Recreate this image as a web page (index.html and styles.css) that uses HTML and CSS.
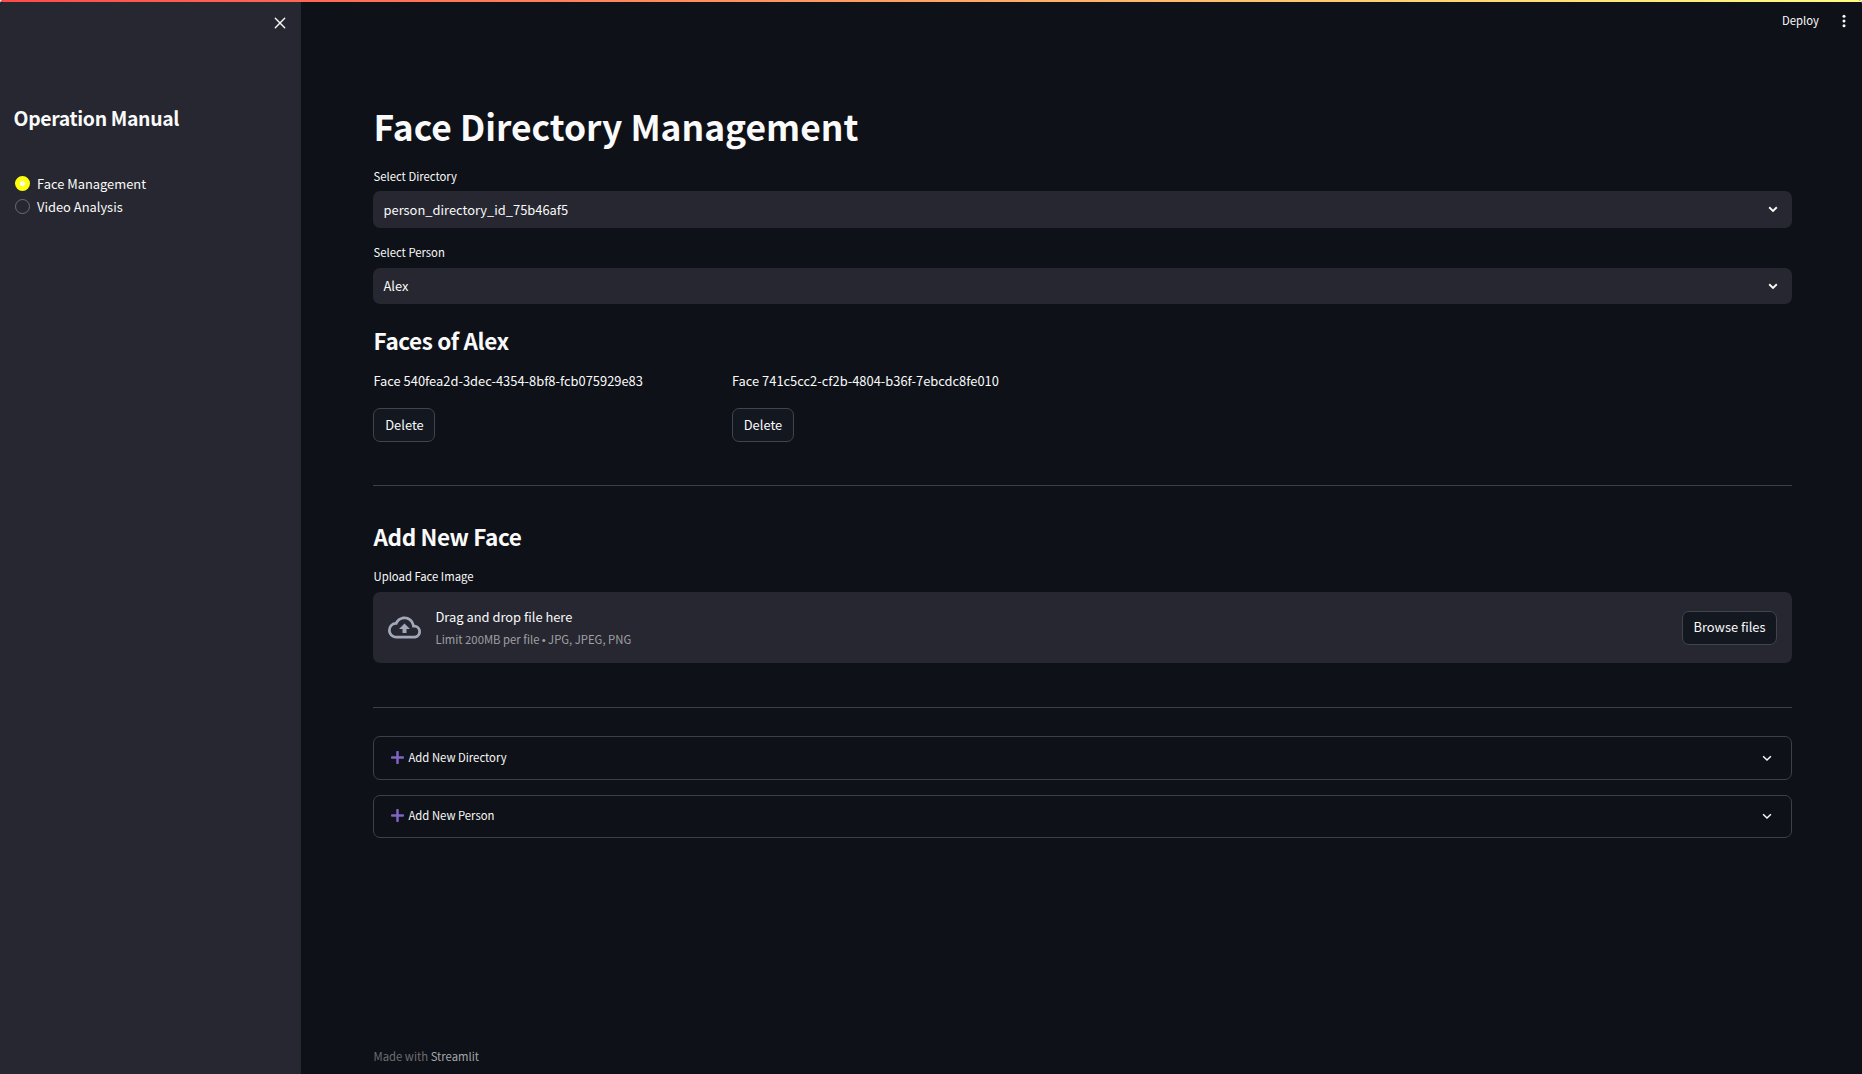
FILE: index.html
```html
<!DOCTYPE html>
<html lang="en">
<head>
<meta charset="utf-8">
<title>Face Directory Management</title>
<link rel="stylesheet" href="styles.css">
</head>
<body>
<div class="decoration"></div>
<div class="app">
  <aside class="sidebar">
    <button class="close" aria-label="Close"><svg width="12" height="12" viewBox="0 0 12 12"><path d="M1.3 1.3l9.4 9.4M10.7 1.3l-9.4 9.4" fill="none" stroke="#fafafa" stroke-width="1.4" stroke-linecap="round"/></svg></button>
    <h2 class="side-title">Operation Manual</h2>
    <div class="radios">
      <label class="radio"><span class="dot dot-on"></span><span>Face Management</span></label>
      <label class="radio"><span class="dot"></span><span>Video Analysis</span></label>
    </div>
  </aside>
  <main class="main">
    <header class="toolbar">
      <span class="deploy">Deploy</span>
      <svg width="4" height="14" viewBox="0 0 4 14" fill="#fafafa"><circle cx="2" cy="2.3" r="1.5"/><circle cx="2" cy="7" r="1.5"/><circle cx="2" cy="11.7" r="1.5"/></svg>
    </header>
    <section class="content">
      <h1 class="title">Face Directory Management</h1>
      <div class="label">Select Directory</div>
      <div class="select select-dir"><span>person_directory_id_75b46af5</span><svg width="10" height="7" viewBox="0 0 10 7"><path d="M1.2 1.3L5 4.9l3.8-3.6" fill="none" stroke="#fafafa" stroke-width="1.9"/></svg></div>
      <div class="label label-person">Select Person</div>
      <div class="select select-person"><span>Alex</span><svg width="10" height="7" viewBox="0 0 10 7"><path d="M1.2 1.3L5 4.9l3.8-3.6" fill="none" stroke="#fafafa" stroke-width="1.9"/></svg></div>
      <h3 class="heading heading-faces">Faces of Alex</h3>
      <div class="faces">
        <div class="face"><p class="face-id">Face 540fea2d-3dec-4354-8bf8-fcb075929e83</p><button class="btn">Delete</button></div>
        <div class="face"><p class="face-id">Face 741c5cc2-cf2b-4804-b36f-7ebcdc8fe010</p><button class="btn">Delete</button></div>
      </div>
      <hr class="rule">
      <h3 class="heading heading-add">Add New Face</h3>
      <div class="label label-upload">Upload Face Image</div>
      <div class="uploader">
        <svg class="cloud" width="33" height="33" viewBox="0 0 24 24" fill="#a3a8b8"><path d="M19.35 10.04A7.49 7.49 0 0012 4C9.11 4 6.6 5.64 5.35 8.04A5.994 5.994 0 000 14c0 3.31 2.69 6 6 6h13c2.76 0 5-2.24 5-5 0-2.64-2.05-4.78-4.65-4.96zM19 18H6c-2.21 0-4-1.79-4-4 0-2.05 1.53-3.76 3.56-3.97l1.07-.11.5-.95A5.469 5.469 0 0112 6c2.62 0 4.88 1.86 5.39 4.43l.3 1.5 1.53.11A2.98 2.98 0 0122 15c0 1.65-1.35 3-3 3zM8 13h2.55v3h2.9v-3H16l-4-4z"/></svg>
        <div class="drop"><span class="drop-main">Drag and drop file here</span><span class="drop-limit">Limit 200MB per file <span class="bullet">•</span> JPG, JPEG, PNG</span></div>
        <button class="btn btn-browse">Browse files</button>
      </div>
      <hr class="rule rule-second">
      <div class="expander"><svg class="plus" width="13" height="13" viewBox="0 0 13 13"><path d="M6.5 1v11M1 6.5h11" stroke="#8064c4" stroke-width="2.5" stroke-linecap="round"/></svg><span>Add New Directory</span><svg class="chevron" width="10" height="7" viewBox="0 0 10 7"><path d="M1.1 1.3L5 5l3.9-3.7" fill="none" stroke="#fafafa" stroke-width="1.5"/></svg></div>
      <div class="expander expander-person"><svg class="plus" width="13" height="13" viewBox="0 0 13 13"><path d="M6.5 1v11M1 6.5h11" stroke="#8064c4" stroke-width="2.5" stroke-linecap="round"/></svg><span>Add New Person</span><svg class="chevron" width="10" height="7" viewBox="0 0 10 7"><path d="M1.1 1.3L5 5l3.9-3.7" fill="none" stroke="#fafafa" stroke-width="1.5"/></svg></div>
    </section>
    <footer class="footer">Made with <b>Streamlit</b></footer>
  </main>
</div>
</body>
</html>
```
FILE: styles.css
```css
* { box-sizing: border-box; }
html { background: #fff; }
body {
  margin: 0;
  height: 1074px;
  overflow: hidden;
  display: flex;
  flex-direction: column;
  border-radius: 4px 4px 0 0;
  background: #0e1117;
  color: #fafafa;
  font: 400 12.9px/22px "Source Sans Pro", "Noto Sans CJK SC", sans-serif;
}
h1, h2, h3, p { margin: 0; }
svg { display: block; flex: none; }
button { font: inherit; color: inherit; }
.decoration { height: 2px; flex: none; background: linear-gradient(90deg, #ff4b4b, #fffd80); }
.app { display: flex; flex: 1; min-height: 0; }
.sidebar {
  width: 301px;
  flex: none;
  display: flex;
  flex-direction: column;
  background: #262730;
  border-top-left-radius: 4px;
  padding-left: 14px;
}
.close { align-self: flex-end; margin: 15px 15px 0 0; padding: 0; border: 0; background: none; }
.side-title { margin-top: 75px; margin-left: -.4px; font-size: 19.4px; line-height: 28px; font-weight: 700; letter-spacing: -.35px; }
.radios { margin-top: 40px; padding-left: 1px; }
.radio { display: flex; align-items: center; gap: 7px; height: 23px; }
.dot { width: 15px; height: 15px; border: 1px solid #6b6c75; border-radius: 50%; }
.dot-on { border: 5px solid #ffff10; background: #fafafa; }
.main { flex: 1; min-width: 0; display: flex; flex-direction: column; padding: 0 70px 0 72px; }
.toolbar { display: flex; align-items: center; justify-content: flex-end; gap: 23px; height: 38px; margin-right: -54px; }
.deploy { font-size: 11.3px; line-height: 18px; margin-top: -2px; }
.content { flex: 1; padding-top: 62px; }
.title { font-size: 35.4px; line-height: 47px; font-weight: 700; padding-left: .6px; }
.label { font-size: 11.3px; line-height: 18px; margin: 18px 0 6px; padding-left: .5px; }
.label-person { margin: 15px 0 7px; }
.label-upload { margin: 16px 0 7px; }
.select { display: flex; align-items: center; justify-content: space-between; height: 37px; padding: 0 14px 0 10.5px; border-radius: 7px; background: #262730; }
.select-person { height: 36px; }
.heading { font-size: 22.5px; line-height: 30px; font-weight: 700; letter-spacing: -.4px; padding-left: .6px; }
.heading-faces { margin-top: 21px; }
.heading-add { margin-top: 35px; }
.faces { display: grid; grid-template-columns: repeat(4, 1fr); gap: 15px; margin-top: 15px; }
.face-id { white-space: nowrap; padding-left: .4px; }
.btn { height: 34px; margin-top: 16px; padding: 0 0 1px 1px; width: 62px; border: 1px solid #41444c; border-radius: 7px; background: #131720; white-space: nowrap; }
.rule { height: 1px; border: 0; margin: 43px 0 0; background: #3e4047; }
.uploader { display: flex; align-items: center; height: 71px; padding: 0 15px; border-radius: 7px; background: #262730; }
.drop { display: flex; flex-direction: column; margin-left: 14.5px; padding-top: 1px; flex: 1; }
.drop-limit { font-size: 11.3px; color: #a0a0a4; }
.bullet { font-family: "Liberation Sans", sans-serif; margin: 0 -.2px; }
.btn-browse { width: 95px; margin: 0; padding-left: 0; }
.rule-second { margin-top: 44px; }
.expander { display: flex; align-items: center; height: 44px; margin-top: 28px; padding: 0 19px 1px 17px; border: 1px solid #3e4047; border-radius: 7px; font-size: 11.3px; }
.expander span { flex: 1; margin-left: 4.5px; padding-bottom: 1px; }
.expander-person { height: 43px; margin-top: 15px; padding-bottom: 2px; }
.chevron { margin-top: 1px; }
.footer { height: 27px; line-height: 18px; font-size: 11.3px; color: #6d6e72; padding-left: .5px; }
.footer b { font-weight: 400; color: #a4a5a8; }
```
